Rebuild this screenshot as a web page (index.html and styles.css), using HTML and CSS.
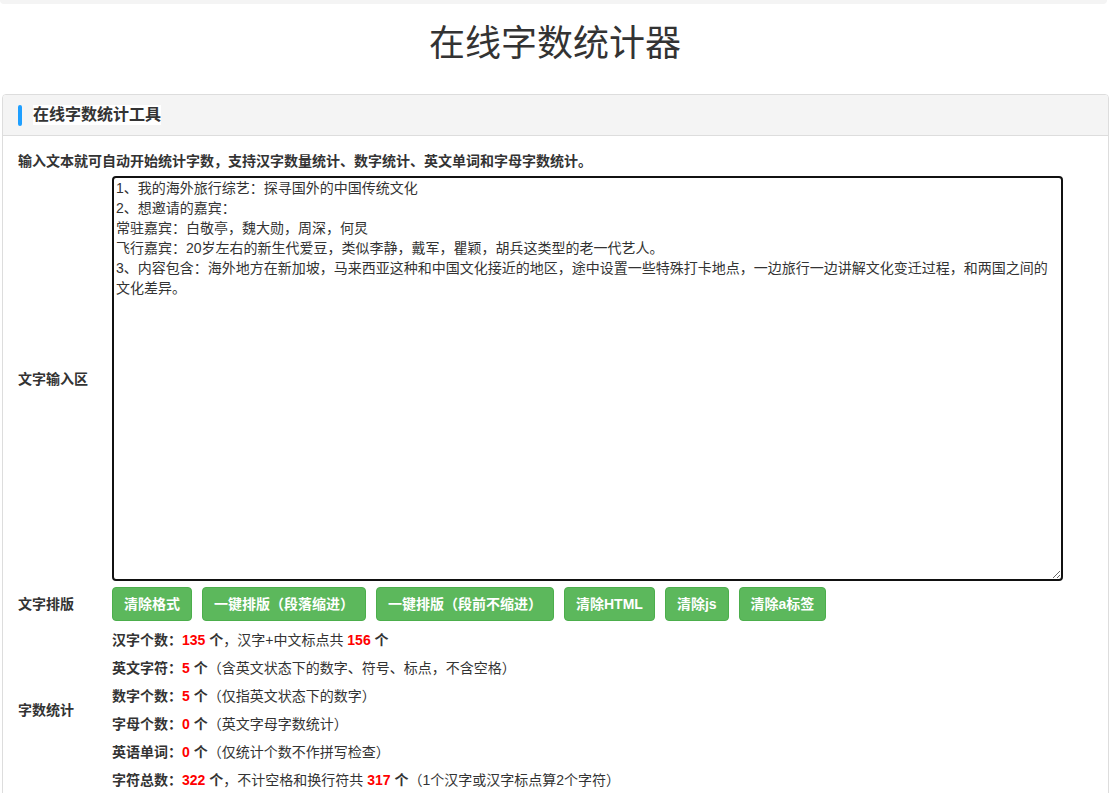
FILE: index.html
```html
<!DOCTYPE html>
<html lang="zh-CN">
<head>
    <meta charset="UTF-8">
    <meta name="viewport" content="width=device-width, initial-scale=1.0">
    <title>在线字数统计器</title>
    <link rel="stylesheet" href="styles.css">
</head>
<body>
    <div class="top-bar"></div>
    <h1 class="page-title">在线字数统计器</h1>

    <div class="panel">
        <div class="panel-heading">
            <span class="heading-mark"></span>
            <span class="heading-text">在线字数统计工具</span>
        </div>
        <div class="panel-body">
            <p class="tip">输入文本就可自动开始统计字数，支持汉字数量统计、数字统计、英文单词和字母字数统计。</p>

            <div class="form-row">
                <div class="row-label">文字输入区</div>
                <div class="row-content">
                    <textarea class="text-input" id="content">1、我的海外旅行综艺：探寻国外的中国传统文化
2、想邀请的嘉宾：
常驻嘉宾：白敬亭，魏大勋，周深，何炅
飞行嘉宾：20岁左右的新生代爱豆，类似李静，戴军，瞿颖，胡兵这类型的老一代艺人。
3、内容包含：海外地方在新加坡，马来西亚这种和中国文化接近的地区，途中设置一些特殊打卡地点，一边旅行一边讲解文化变迁过程，和两国之间的文化差异。
</textarea>
                </div>
            </div>

            <div class="form-row">
                <div class="row-label">文字排版</div>
                <div class="row-content buttons">
                    <button class="btn">清除格式</button>
                    <button class="btn">一键排版（段落缩进）</button>
                    <button class="btn">一键排版（段前不缩进）</button>
                    <button class="btn">清除HTML</button>
                    <button class="btn">清除js</button>
                    <button class="btn">清除a标签</button>
                </div>
            </div>

            <div class="form-row stats-row">
                <div class="row-label">字数统计</div>
                <div class="row-content">
                    <div class="stat"><b>汉字个数：</b><em>135</em> <b>个</b>，汉字+中文标点共 <em>156</em> <b>个</b></div>
                    <div class="stat"><b>英文字符：</b><em>5</em> <b>个</b>（含英文状态下的数字、符号、标点，不含空格）</div>
                    <div class="stat"><b>数字个数：</b><em>5</em> <b>个</b>（仅指英文状态下的数字）</div>
                    <div class="stat"><b>字母个数：</b><em>0</em> <b>个</b>（英文字母字数统计）</div>
                    <div class="stat"><b>英语单词：</b><em>0</em> <b>个</b>（仅统计个数不作拼写检查）</div>
                    <div class="stat"><b>字符总数：</b><em>322</em> <b>个</b>，不计空格和换行符共 <em>317</em> <b>个</b>（1个汉字或汉字标点算2个字符）</div>
                </div>
            </div>
        </div>
    </div>
</body>
</html>
```

FILE: styles.css
```css
* {
    box-sizing: border-box;
}
body {
    margin: 0;
    font-family: "Liberation Sans", "Noto Sans CJK SC", sans-serif;
    font-size: 14px;
    line-height: 20px;
    color: #333;
    background: #fff;
}
.top-bar {
    height: 4px;
    margin-right: 3px;
    background: #f4f4f4;
    border-radius: 0 0 4px 4px;
}
.page-title {
    margin: 20px 0 30px;
    text-align: center;
    font-size: 36px;
    line-height: 40px;
    font-weight: normal;
    color: #333;
}
.panel {
    margin: 0 1px 0 2px;
    border: 1px solid #ddd;
    border-radius: 4px;
}
.panel-heading {
    display: flex;
    align-items: center;
    height: 41px;
    padding: 0 15px;
    background: #f4f4f4;
    border-bottom: 1px solid #ddd;
    border-radius: 3px 3px 0 0;
}
.heading-mark {
    width: 4px;
    height: 21px;
    margin-right: 11px;
    background: #1e9fff;
    border-radius: 2px;
}
.heading-text {
    font-size: 16px;
    font-weight: bold;
    background: #fff;
}
.panel-body {
    padding: 15px;
}
.tip {
    margin: 0 0 2px;
    font-weight: bold;
}
.form-row {
    display: grid;
    grid-template-columns: 94px 1fr;
    align-items: center;
    padding: 3px 0;
}
.row-label {
    font-weight: bold;
}
.text-input {
    display: block;
    width: 951px;
    height: 405px;
    padding: 0 2px;
    border: 2px solid #111;
    border-radius: 4px;
    font-family: "Liberation Sans", "Noto Sans CJK SC", sans-serif;
    font-size: 14px;
    line-height: 20px;
    color: #333;
    outline: none;
}
.buttons {
    display: flex;
    gap: 10px;
}
.btn {
    height: 34px;
    padding: 6px 11px;
    font-family: "Liberation Sans", "Noto Sans CJK SC", sans-serif;
    font-size: 14px;
    line-height: 20px;
    font-weight: bold;
    color: #fff;
    background: #5cb85c;
    border: 1px solid #4cae4c;
    border-radius: 4px;
    cursor: pointer;
}
.stats-row {
    padding-top: 2px;
}
.stat {
    padding: 4px 0;
}
.stat b {
    font-weight: bold;
}
.stat em {
    font-style: normal;
    font-weight: bold;
    color: #f00;
}
```
